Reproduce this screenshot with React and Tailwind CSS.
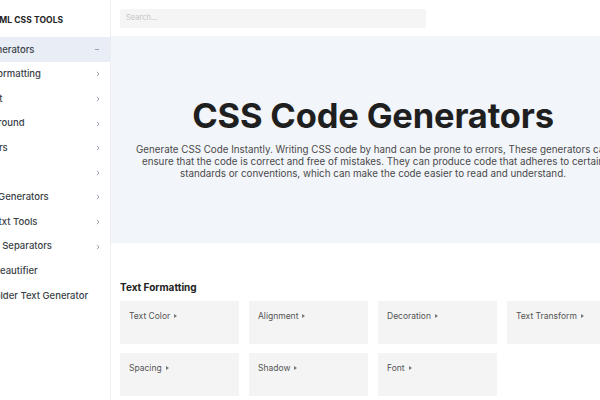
import React from "react";

const items = [
  { t: "CSS Generators", open: true, off: "ml-[-10px]" },
  { t: "Text Formatting", off: "ml-[-2px]" },
  { t: "Layout", off: "" },
  { t: "Background", off: "ml-[-2px]" },
  { t: "Borders", off: "" },
  { t: "Grid", off: "" },
  { t: "Color Generators", off: "ml-[-1px]" },
  { t: "Robots.txt Tools", off: "ml-[-8px]" },
  { t: "SVG Separators", off: "ml-[8px]" },
  { t: "CSS Beautifier", none: true, off: "" },
  { t: "Placeholder Text Generator", none: true, off: "ml-[-8px]" },
];

const cards = ["Text Color", "Alignment", "Decoration", "Text Transform", "Spacing", "Shadow", "Font"];

function Chevron({ down }) {
  return down ? (
    <svg width="6" height="4" viewBox="0 0 6 4" className="text-gray-400">
      <path d="M1 1.5h4" stroke="currentColor" strokeWidth="1" fill="none" />
    </svg>
  ) : (
    <svg width="4" height="6" viewBox="0 0 4 6" className="text-gray-400">
      <path d="M1 0.8L3 3L1 5.2" stroke="currentColor" strokeWidth="1" fill="none" />
    </svg>
  );
}

export default function App() {
  return (
    <div className="w-[600px] h-[400px] overflow-hidden flex bg-white" style={{ fontFamily: "Inter, 'Liberation Sans', sans-serif" }}>
      <aside className="w-[111px] shrink-0 border-r border-[#eceef1] overflow-hidden bg-white">
        <div className="ml-[-28px] w-[139px]">
          <div className="h-[37px] flex items-center pt-[3px]">
            <span className="ml-[15px] text-[8.5px] font-bold text-[#222] tracking-[0.01em]">HTML CSS TOOLS</span>
          </div>
          {items.map((it, i) => (
            <div
              key={i}
              className={`h-[24.6px] flex items-center justify-between pr-[11px] pt-[1px] ${it.open ? "bg-[#e9eef6]" : ""}`}
            >
              <span className={`text-[9.5px] font-medium text-[#3a3f47] whitespace-nowrap ${it.off}`}>{it.t}</span>
              {!it.none && <Chevron down={it.open} />}
            </div>
          ))}
        </div>
      </aside>
      <main className="w-[524px] shrink-0 flex flex-col">
        <div className="h-[36px] flex items-center pl-[9px]">
          <div className="w-[306px] h-[19px] bg-[#f5f5f5] rounded-[2px] flex items-center pl-[6px]">
            <span className="text-[7.5px] text-[#c4c4c4]">Search...</span>
          </div>
        </div>
        <section className="h-[207px] bg-[#f2f5f9] flex flex-col items-center pt-[60px]">
          <h1 className="text-[34.5px] leading-[40px] font-bold text-[#1f1f1f] tracking-[-0.005em]">CSS Code Generators</h1>
          <p className="mt-[8px] text-[9.8px] leading-[12px] text-[#4a4a4a] text-center whitespace-nowrap">
            Generate CSS Code Instantly. Writing CSS code by hand can be prone to errors, These generators can
            <br />
            ensure that the code is correct and free of mistakes. They can produce code that adheres to certain
            <br />
            standards or conventions, which can make the code easier to read and understand.
          </p>
        </section>
        <div className="pl-[9px] pt-[38px]">
          <h2 className="text-[10px] font-bold text-[#222] leading-[13px]">Text Formatting</h2>
          <div className="mt-[7px] grid grid-cols-[repeat(4,119px)] gap-x-[10px] gap-y-[9px]">
            {cards.map((c) => (
              <div key={c} className="h-[43px] bg-[#f4f4f4] pl-[9px] pt-[9px]">
                <span className="text-[8.5px] text-[#555] flex items-center gap-[4px]">
                  {c}
                  <svg width="3" height="4" viewBox="0 0 3 4"><path d="M0 0L3 2L0 4Z" fill="#777" /></svg>
                </span>
              </div>
            ))}
          </div>
        </div>
      </main>
    </div>
  );
}
